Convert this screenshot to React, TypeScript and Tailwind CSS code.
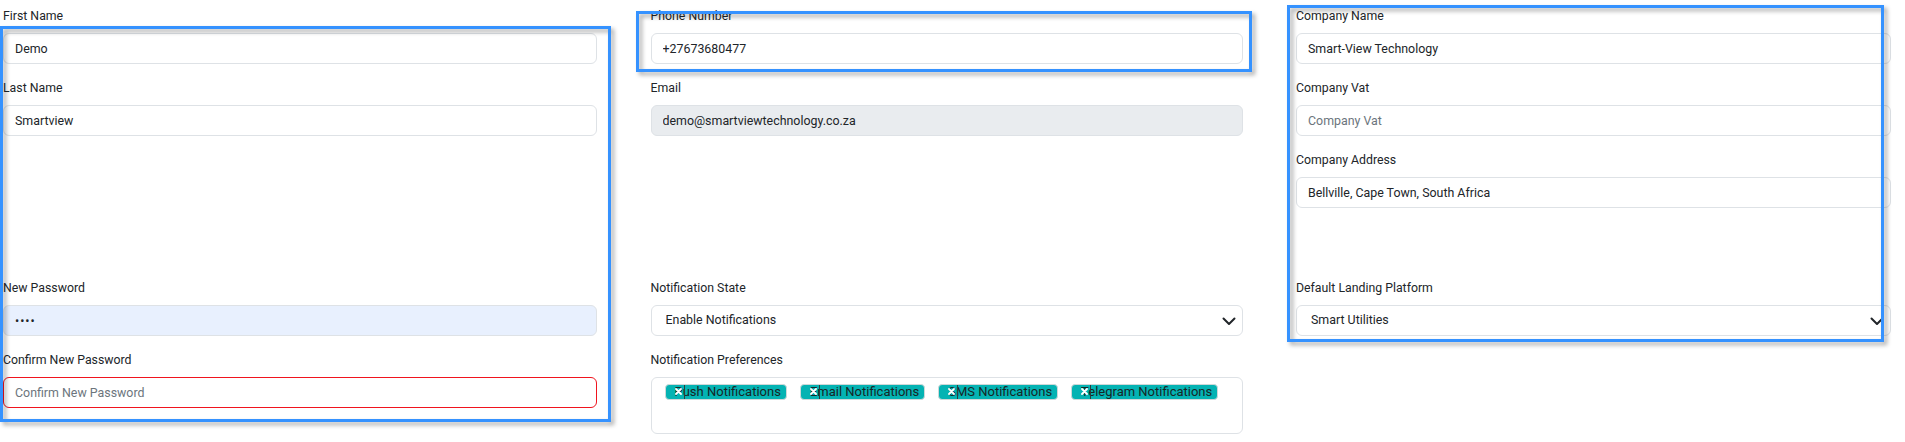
import React from "react";

const labelCls = "block text-[12.3px] leading-[18px] mb-2 text-[#212529]";
const inputCls =
  "block w-full h-[31px] rounded-[6px] border border-[#dee2e6] bg-white pl-[11px] pr-3 text-[12.4px] text-[#212529] placeholder:text-[#6c757d] outline-none";

function Field({ label, children }: { label: string; children: React.ReactNode }) {
  return (
    <div>
      <label className={labelCls}>{label}</label>
      {children}
    </div>
  );
}

function TextInput({ value, placeholder, extra = "", type = "text" }: { value?: string; placeholder?: string; extra?: string; type?: string }) {
  return <input type={type} readOnly value={value ?? ""} placeholder={placeholder} className={`${inputCls} ${extra}`} />;
}

function Select({ value }: { value: string }) {
  return (
    <div className="relative">
      <select
        value={value}
        onChange={() => {}}
        className="block w-full h-[31px] appearance-none rounded-[6px] border border-[#dee2e6] bg-white pl-[14px] pr-8 text-[12.4px] text-[#212529] outline-none"
      >
        <option>{value}</option>
      </select>
      <svg className="pointer-events-none absolute right-[6px] top-[8px]" width="16" height="16" viewBox="0 0 16 16" fill="none">
        <path d="M2.5 5.5 8 11l5.5-5.5" stroke="#212529" strokeWidth="2" strokeLinecap="round" strokeLinejoin="round" />
      </svg>
    </div>
  );
}

function Chip({ text }: { text: string }) {
  return (
    <div className="relative h-[16px] rounded-[4px] border border-[#cfd8d8] bg-[#04b3b3] pl-[9px] pr-[5px] text-[13px] leading-[14px] text-[#172626]">
      {text}
      <svg className="absolute left-[9px] top-[3px]" width="7" height="7" viewBox="0 0 7 7">
        <path d="M1 1l5 5M6 1 1 6" stroke="#ffffff" strokeWidth="1.8" strokeLinecap="round" />
      </svg>
      <span className="absolute left-[18px] top-0 h-[14px] w-px bg-[#2c3e3e]" />
    </div>
  );
}

export default function App() {
  return (
    <div className="relative h-[442px] w-[1905px] overflow-hidden bg-white font-['Roboto',sans-serif]">
      <div className="grid grid-cols-[594px_592px_595px] gap-x-[53.5px] gap-y-[71px] pl-[3px] pt-[7px]">
        <div className="flex flex-col gap-[15px]">
          <Field label="First Name">
            <TextInput value="Demo" />
          </Field>
          <Field label="Last Name">
            <TextInput value="Smartview" />
          </Field>
        </div>
        <div className="flex flex-col gap-[15px]">
          <Field label="Phone Number">
            <TextInput value="+27673680477" />
          </Field>
          <Field label="Email">
            <TextInput value="demo@smartviewtechnology.co.za" extra="!bg-[#e9ecef]" />
          </Field>
        </div>
        <div className="flex flex-col gap-[15px]">
          <Field label="Company Name">
            <TextInput value="Smart-View Technology" />
          </Field>
          <Field label="Company Vat">
            <TextInput placeholder="Company Vat" />
          </Field>
          <Field label="Company Address">
            <TextInput value="Bellville, Cape Town, South Africa" />
          </Field>
        </div>

        <div className="flex flex-col gap-[15px]">
          <Field label="New Password">
            <TextInput type="password" value="1234" extra="!bg-[#e8f0fe] tracking-[1px]" />
          </Field>
          <Field label="Confirm New Password">
            <TextInput placeholder="Confirm New Password" extra="!border-[#f0141e]" />
          </Field>
        </div>
        <div className="flex flex-col gap-[15px]">
          <Field label="Notification State">
            <Select value="Enable Notifications" />
          </Field>
          <Field label="Notification Preferences">
            <div className="flex h-[57px] flex-wrap items-start gap-[13px] rounded-[6px] border border-[#dee2e6] bg-white pl-[13px] pt-[6px]">
              <Chip text="Push Notifications" />
              <Chip text="Email Notifications" />
              <Chip text="SMS Notifications" />
              <Chip text="Telegram Notifications" />
            </div>
          </Field>
        </div>
        <div className="flex flex-col gap-[15px]">
          <Field label="Default Landing Platform">
            <Select value="Smart Utilities" />
          </Field>
        </div>
      </div>

      {/* highlight frames drawn over the form */}
      <div className="pointer-events-none absolute left-0 top-[26px] h-[396px] w-[611px] border-[3px] border-[#3592ff] drop-shadow-[3px_3px_2px_rgba(0,0,0,0.35)]" />
      <div className="pointer-events-none absolute left-[636px] top-[11px] h-[61px] w-[616px] border-[3px] border-[#3592ff] drop-shadow-[3px_3px_2px_rgba(0,0,0,0.35)]" />
      <div className="pointer-events-none absolute left-[1287px] top-[5px] h-[337px] w-[597px] border-[3px] border-[#3592ff] drop-shadow-[3px_3px_2px_rgba(0,0,0,0.35)]" />
    </div>
  );
}
